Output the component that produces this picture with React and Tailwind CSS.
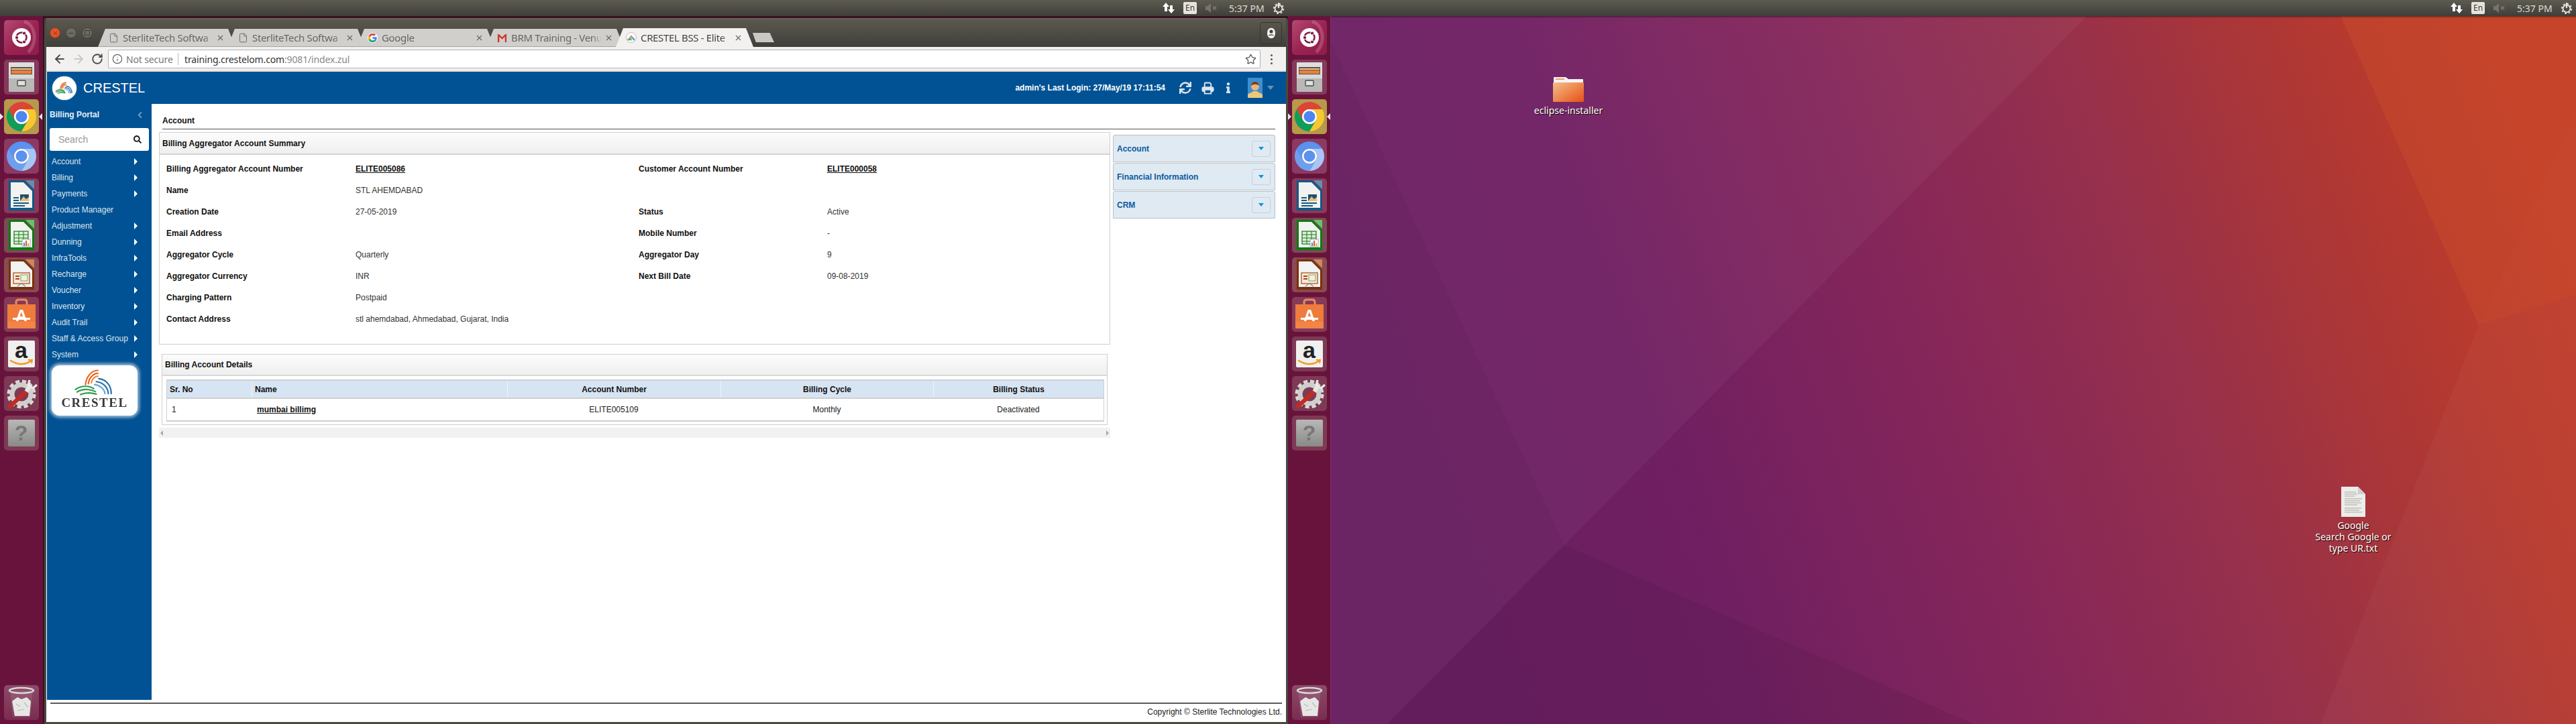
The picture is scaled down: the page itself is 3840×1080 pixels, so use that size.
import React from "react";
import { ArrowLeft, ArrowRight, RotateCw, Star, Info, X, File } from "lucide-react";
import { FaSync, FaInfo, FaSearch, FaChevronLeft } from "react-icons/fa";

const ubuntuFont = "font-['Noto_Sans',sans-serif]";

function ChromeMark({ a, b, c, core }) {
  return (
    <svg viewBox="0 0 52 52" className="w-[52px] h-[52px]">
      <path d="M6.95 15 A22 22 0 0 1 45.05 15 L26 15 A11 11 0 0 0 16.5 31.5 Z" fill={a} />
      <path d="M45.05 15 A22 22 0 0 1 26 48 L35.5 31.5 A11 11 0 0 0 26 15 Z" fill={b} />
      <path d="M26 48 A22 22 0 0 1 6.95 15 L16.5 31.5 A11 11 0 0 0 35.5 31.5 Z" fill={c} />
      <circle cx="26" cy="26" r="11" fill="#fff" />
      <circle cx="26" cy="26" r="8.5" fill={core} />
    </svg>
  );
}

function OfficeDoc({ edge, corner, children }) {
  return (
    <svg viewBox="0 0 52 52" className="w-[52px] h-[52px]">
      <path d="M7 3 H30 L45 18 V48 H7 Z" fill={edge} />
      <path d="M32 3 H45 V16 Z" fill={corner} />
      <path d="M10 6 H29 L42 19 V44 H10 Z" fill="#f2f2f0" />
      {children}
    </svg>
  );
}

function Swirl({ className, sw = 3 }) {
  return (
    <svg viewBox="0 0 100 66" className={className} fill="none" strokeLinecap="round">
      <g stroke="#e8641e" strokeWidth={sw}>
        <path d="M28 38 C30 20 42 4 58 4" />
        <path d="M35 36 C36 24 46 11 58 11" />
        <path d="M42 34 C43 27 50 18 58 18" stroke="#f08c3a" />
      </g>
      <g stroke="#2f9a4b" strokeWidth={sw}>
        <path d="M4 50 C20 38 40 42 48 48" />
        <path d="M8 56 C24 46 42 50 52 55" />
        <path d="M16 62 C30 56 44 58 54 61" />
      </g>
      <g stroke="#2a6fa8" strokeWidth={sw}>
        <path d="M60 24 C78 26 90 40 90 60" />
        <path d="M54 31 C70 33 82 44 83 60" />
        <path d="M50 38 C64 40 74 50 75 60" stroke="#5fa6d4" />
      </g>
    </svg>
  );
}

function Tile({ className, children }) {
  return (
    <div className={`w-[52px] h-[52px] rounded-[5px] shrink-0 flex items-center justify-center overflow-hidden ${className}`}>
      {children}
    </div>
  );
}

function Launcher({ rightEdge }) {
  return (
    <div className={`w-16 shrink-0 h-full relative flex flex-col items-center pt-[6px] pb-[6px] gap-[7px] bg-[#68133c] ${rightEdge}`}>
      <Tile className="bg-linear-to-br from-[#b34a74] via-[#9c2352] to-[#8d1b49]">
        <svg viewBox="0 0 52 52" className="w-[52px] h-[52px]">
          <path d="M30 2 C48 8 50 34 36 48" fill="none" stroke="#ffffff" strokeOpacity=".18" strokeWidth="5" />
          <circle cx="26" cy="26" r="14" fill="#fff" />
          <circle cx="26" cy="26" r="7.5" fill="none" stroke="#7a1a3c" strokeWidth="2.5" />
          <circle cx="19" cy="26" r="2.6" fill="#7a1a3c" stroke="#fff" />
          <circle cx="30" cy="19.5" r="2.6" fill="#7a1a3c" stroke="#fff" />
          <circle cx="30" cy="32.5" r="2.6" fill="#7a1a3c" stroke="#fff" />
        </svg>
      </Tile>
      <Tile className="bg-[#853a5a]">
        <svg viewBox="0 0 52 52" className="w-[52px] h-[52px]">
          <rect x="7" y="4" width="38" height="20" rx="1" fill="#dededc" />
          <rect x="10" y="11" width="32" height="12" fill="#5a5048" />
          <rect x="11" y="13" width="30" height="2" fill="#f6c48c" />
          <rect x="11" y="16" width="30" height="5" fill="#e8803a" />
          <rect x="7" y="22" width="38" height="26" rx="1" fill="#b8b8b6" />
          <rect x="7" y="22" width="38" height="6" fill="#d8d8d6" />
          <rect x="20" y="31" width="12" height="8" rx="1" fill="#e0e0de" stroke="#4b4b4b" strokeWidth="1.4" />
        </svg>
      </Tile>
      <Tile className="bg-[#b6994a]">
        <ChromeMark a="#dc4437" b="#f6c830" c="#109d58" core="#4d86f0" />
      </Tile>
      <Tile className="bg-[#8b3a63]">
        <ChromeMark a="#5a92ee" b="#a8c6f5" c="#6e9fef" core="#5a92ee" />
      </Tile>
      <Tile className="bg-[#8a3a5c]">
        <OfficeDoc edge="#0f5b84" corner="#5a93b4">
          <rect x="14" y="28" width="8" height="2" fill="#14597f" />
          <rect x="14" y="32" width="8" height="2" fill="#14597f" />
          <rect x="14" y="36" width="23" height="2" fill="#14597f" />
          <rect x="14" y="40" width="17" height="2" fill="#14597f" />
          <rect x="24" y="24" width="13" height="10" fill="#234f6d" />
          <path d="M24 34 L29 27 L33 31 L37 28 V34 Z" fill="#e3c07a" />
        </OfficeDoc>
      </Tile>
      <Tile className="bg-[#7a4b55]">
        <OfficeDoc edge="#0e7b14" corner="#6cc06a">
          <rect x="15" y="20" width="21" height="19" fill="#dff0d8" stroke="#177a1f" strokeWidth="1.2" />
          <path d="M15 25 H36 M15 30 H36 M15 35 H36 M22 20 V39 M29 20 V39" stroke="#177a1f" strokeWidth="1" />
          <rect x="27" y="32" width="12" height="11" fill="#fff" stroke="#888" strokeWidth=".7" />
          <rect x="29" y="37" width="2" height="5" fill="#2e8fd6" />
          <rect x="32" y="34" width="2" height="8" fill="#e0562a" />
          <rect x="35" y="38" width="2" height="4" fill="#f0a030" />
        </OfficeDoc>
      </Tile>
      <Tile className="bg-[#8a4a52]">
        <OfficeDoc edge="#7a300c" corner="#c98a5a">
          <rect x="14" y="23" width="24" height="16" fill="#fde8d8" stroke="#a1461c" strokeWidth="1.2" />
          <rect x="17" y="27" width="6" height="2" fill="#a1461c" />
          <rect x="17" y="31" width="6" height="2" fill="#a1461c" />
          <rect x="25" y="26" width="10" height="9" fill="#e9f3df" stroke="#668a44" strokeWidth=".8" />
          <path d="M20 43 L26 39 L32 43" stroke="#888" strokeWidth="1.2" fill="none" />
        </OfficeDoc>
      </Tile>
      <Tile className="bg-[#853a56]">
        <svg viewBox="0 0 52 52" className="w-[52px] h-[52px]">
          <path d="M18 14 V8 Q18 4 22 4 H30 Q34 4 34 8 V14" stroke="#e88a5c" strokeWidth="3" fill="none" />
          <rect x="5" y="11" width="42" height="36" fill="#ef7b3c" />
          <rect x="5" y="37" width="42" height="10" fill="#f28448" />
          <text x="26" y="36" textAnchor="middle" fontSize="24" fontWeight="700" fill="#fff" fontFamily="Liberation Sans">A</text>
          <rect x="13" y="31" width="26" height="3" fill="#fff" />
        </svg>
      </Tile>
      <Tile className="bg-[#7e3a55]">
        <div className="w-[40px] h-[40px] rounded-[2px] bg-[#f0f0f0] flex flex-col items-center text-[#222]">
          <span className="text-[34px] leading-[28px] font-bold">a</span>
          <svg viewBox="0 0 36 10" className="w-[36px] h-[10px]">
            <path d="M2 2 Q18 12 33 2" stroke="#f59a1c" strokeWidth="2.5" fill="none" strokeLinecap="round" />
            <path d="M28 1 L34 1 L33 6" stroke="#f59a1c" strokeWidth="2" fill="none" />
          </svg>
        </div>
      </Tile>
      <Tile className="bg-[#7e3a55]">
        <svg viewBox="0 0 52 52" className="w-[52px] h-[52px]">
          <circle cx="26" cy="27" r="19" fill="none" stroke="#d8d8d6" strokeWidth="5" strokeDasharray="6 4" />
          <circle cx="26" cy="27" r="14" fill="none" stroke="#cfcfcd" strokeWidth="7" />
          <path d="M9 45 L33 23" stroke="#c42a20" strokeWidth="6" strokeLinecap="round" />
          <path d="M33 23 L40 14" stroke="#e8e8e6" strokeWidth="6" />
          <path d="M38 6 L36 14 L43 18 L49 13" fill="none" stroke="#e8e8e6" strokeWidth="3.5" />
        </svg>
      </Tile>
      <Tile className="bg-[#7e3a55]">
        <div className="w-[40px] h-[40px] rounded-[2px] bg-linear-to-b from-[#b8b8b6] to-[#8a8a88] flex items-center justify-center text-[32px] leading-none font-bold text-[#777]">?</div>
      </Tile>
      <Tile className="mt-auto bg-linear-to-b from-[#8b4a68] to-[#7b2c50]">
        <svg viewBox="0 0 52 52" className="w-[52px] h-[52px]">
          <path d="M9 8 L13 48 H39 L43 8 Z" fill="#fff" fillOpacity=".1" />
          <ellipse cx="26" cy="8" rx="18" ry="4" fill="none" stroke="#d6d6d4" strokeWidth="2.5" />
          <path d="M12 24 L20 18 L26 21 L34 18 L40 24 L38 46 H16 Z" fill="#e6e6e4" />
          <path d="M18 28 L24 32 M30 26 L36 33 M20 38 L30 36" stroke="#bbb" strokeWidth="1.2" />
        </svg>
      </Tile>
      <svg viewBox="0 0 5 10" className="absolute left-0 top-[145px] w-[5px] h-[10px]"><path d="M0 0 L5 5 L0 10 Z" fill="#e8e8e8" /></svg>
      <svg viewBox="0 0 5 10" className="absolute right-[0px] top-[145px] w-[5px] h-[10px]"><path d="M5 0 L0 5 L5 10 Z" fill="#e8e8e8" /></svg>
    </div>
  );
}

function PanelIcons() {
  return (
    <div className={`${ubuntuFont} ml-auto mr-[5px] flex items-center h-6 text-[#dfdbd2]`}>
      <svg viewBox="0 0 20 20" className="w-[20px] h-[20px] mr-[12px]">
        <path d="M6 2 L11 8 H8 V15 H4 V8 H1 Z" fill="#fff" />
        <path d="M14 18 L9 12 H12 V6 H16 V12 H19 Z" fill="#fff" />
      </svg>
      <div className="w-5 h-[18px] rounded-[2px] bg-[#e6e3dd] flex items-center justify-center text-[#3c3b37] text-[12px]">En</div>
      <svg viewBox="0 0 20 20" className="w-[20px] h-[20px] ml-[11px]">
        <path d="M2 7 H5 L10 3 V17 L5 13 H2 Z" fill="#75736c" />
        <path d="M13 7.5 L18 12.5 M18 7.5 L13 12.5" stroke="#75736c" strokeWidth="1.8" />
      </svg>
      <span className="ml-[17px] w-[53px] text-[14px] whitespace-nowrap">5:37 PM</span>
      <svg viewBox="0 0 20 20" className="w-[18px] h-[18px] ml-[12px]">
        <circle cx="10" cy="11" r="6" fill="none" stroke="#e8e5de" strokeWidth="2" />
        <circle cx="10" cy="11" r="8" fill="none" stroke="#e8e5de" strokeWidth="2" strokeDasharray="3 3.3" />
        <path d="M10 1 V10" stroke="#e8e5de" strokeWidth="2.4" />
      </svg>
    </div>
  );
}

function Panel() {
  return (
    <div className="h-6 shrink-0 flex bg-linear-to-b from-[#5e5c51] to-[#3f3e39]">
      <PanelIcons />
    </div>
  );
}

function Tab({ icon, title, active, first }) {
  return (
    <div className={`relative w-[205px] h-[27px] shrink-0 flex items-center pl-[15px] pr-[15px] [clip-path:polygon(11px_0,calc(100%-11px)_0,100%_100%,0_100%)] ${first ? "" : "-ml-[12px]"} ${active ? "bg-[#f2f1f0] z-10 h-[28px]" : "bg-[#d0cfcc] border-b border-[#a5a5a3]"}`}>
      <span className="w-[16px] h-[16px] shrink-0 flex items-center justify-center">{icon}</span>
      <span className={`${ubuntuFont} ml-[6px] w-[135px] overflow-hidden whitespace-nowrap text-[15px] tracking-[-0.35px] leading-[20px] [mask-image:linear-gradient(to_right,black_90%,transparent)] ${active ? "text-[#454545]" : "text-[#666]"}`}>{title}</span>
      <X className="ml-[4px] shrink-0 text-[#666]" size={13} strokeWidth={2} />
    </div>
  );
}

function GoogleG() {
  return (
    <svg viewBox="0 0 48 48" className="w-[15px] h-[15px]">
      <circle cx="24" cy="24" r="24" fill="#fff" />
      <path d="M43 20H24v8.5h11C33.5 33.5 29.5 36.5 24 36.500 C17 36.5 11.500 31 11.500 24 S17 11.500 24 11.500 c3.200 0 6 1.200 8.200 3.100 l6.300-6.300 C34.700 4.900 29.700 3 24 3 C12.400 3 3 12.400 3 24 s9.400 21 21 21 C35 45 44 37 44 24 c0-1.400-.4-2.700-1-4z" fill="#4285f4" />
      <path d="M5.500 14 l7 5.100 C14.200 14.800 18.700 11.500 24 11.500 c3.200 0 6 1.200 8.200 3.100 l6.300-6.300 C34.700 4.900 29.700 3 24 3 C16 3 9.100 7.500 5.500 14z" fill="#ea4335" />
      <path d="M24 45 c5.500 0 10.500-2 14.200-5.500 l-6.600-5.500 c-2 1.600-4.600 2.500-7.600 2.500 -5.400 0-9.900-3.400-11.600-8.200 l-7 5.400 C8.900 40.400 15.900 45 24 45z" fill="#34a853" />
      <path d="M12.400 28.800 c-.5-1.500-.9-3.100-.9-4.800 s.3-3.400.9-4.900 l-7-5.100 C3.900 16.900 3 20.300 3 24 s.9 7.100 2.500 10.200z" fill="#fbbc05" />
    </svg>
  );
}

function ChromeBar() {
  return (
    <>
      <div className="h-[43px] shrink-0 flex bg-linear-to-b from-[#5c5a4f] to-[#403f3a] border-t border-[#6f6e64]">
        <div className="w-[77px] shrink-0 flex items-start gap-[8px] pl-[5px] pt-[13px]">
          <span className="w-4 h-4 rounded-full bg-[#e0552c] border border-[#8e3a1c] flex items-center justify-center"><X size={9} strokeWidth={2} className="text-[#6e2a12]" /></span>
          <span className="w-4 h-4 rounded-full bg-[#6d6c63] border border-[#45443e] flex items-center justify-center"><span className="w-2 h-[1px] bg-[#3a3935]" /></span>
          <span className="w-4 h-4 rounded-full bg-[#6d6c63] border border-[#45443e] flex items-center justify-center"><span className="w-2 h-2 border border-[#3a3935]" /></span>
        </div>
        <div className="flex items-end">
          <Tab first title="SterliteTech Softwa" icon={<File size={15} strokeWidth={1.5} className="text-[#666]" />} />
          <Tab title="SterliteTech Softwa" icon={<File size={15} strokeWidth={1.5} className="text-[#666]" />} />
          <Tab title="Google" icon={<GoogleG />} />
          <Tab title="BRM Training - Venu" icon={
            <svg viewBox="0 0 16 16" className="w-[15px] h-[15px]"><path d="M1 2 H3 L8 7 L13 2 H15 V15 H12.500 V6 L8 10.500 L3.500 6 V15 H1 Z" fill="#d0382c" /></svg>
          } />
          <Tab active title="CRESTEL BSS - Elite" icon={
            <span className="w-[16px] h-[16px] rounded-full bg-white border border-[#bbb] flex items-center justify-center"><Swirl className="w-[12px] h-[9px]" sw={8} /></span>
          } />
          <div className="w-[32px] h-[14px] ml-[-1px] mb-[7px] z-10 bg-[#c9c8c4] [clip-path:polygon(0_0,80%_0,100%_100%,15%_100%)]" />
        </div>
        <div className="ml-auto mr-[6px] mt-[5px] w-[33px] h-[33px] rounded-[4px] border border-[#36352f] flex items-center justify-center">
          <svg viewBox="0 0 16 20" className="w-[14px] h-[17px]">
            <path d="M8 1 C12 1 15 4 15 10 C15 16 12 19 8 19 C4 19 1 16 1 10 C1 4 4 1 8 1 Z" fill="#f2f2f0" />
            <circle cx="8" cy="7" r="3" fill="#403f3a" />
            <path d="M2.500 15 C4 11 12 11 13.500 15 C12 13.500 4 13.500 2.500 15Z" fill="#403f3a" />
          </svg>
        </div>
      </div>
      <div className="h-[37px] shrink-0 bg-[#f2f1f0] flex items-start pl-[10px] pr-[6px] pt-[4px] border-b-2 border-[#dedddb]">
        <div className="flex items-center text-[#4a4a4a] h-[28px]">
          <ArrowLeft size={20} strokeWidth={2.4} />
          <ArrowRight size={20} strokeWidth={2.4} className="ml-[8px] text-[#c8c8c6]" />
          <RotateCw size={18} strokeWidth={2.4} className="ml-[9px]" />
        </div>
        <div className={`${ubuntuFont} ml-[7px] flex-1 h-[28px] bg-white border border-[#b2b2b2] rounded-[2px] flex items-center text-[14px] tracking-[-0.15px] pl-[5px] pr-[5px] whitespace-nowrap`}>
          <Info size={16} strokeWidth={1.8} className="text-[#666]" />
          <span className="ml-[5px] text-[#777] w-[68px]">Not secure</span>
          <span className="ml-[9px] h-[18px] w-[1px] bg-[#bbb]" />
          <span className="ml-[9px] text-[#333]">training.crestelom.com</span>
          <span className="text-[#888]">:9081/index.zul</span>
          <Star size={17} strokeWidth={1.8} className="ml-auto text-[#555]" />
        </div>
        <div className="w-[32px] h-[28px] flex flex-col items-center justify-center gap-[3px]">
          <span className="w-[3px] h-[3px] rounded-full bg-[#555]" />
          <span className="w-[3px] h-[3px] rounded-full bg-[#555]" />
          <span className="w-[3px] h-[3px] rounded-full bg-[#555]" />
        </div>
      </div>
    </>
  );
}

function AppHeader() {
  return (
    <div className="h-12 shrink-0 ml-[1px] bg-[#015294] flex items-center text-white">
      <div className="ml-[8px] w-[36px] h-[35px] rounded-full bg-white flex items-center justify-center shadow-[0_0_2px_rgba(255,255,255,.7)]">
        <Swirl className="w-[28px] h-[20px]" sw={5} />
      </div>
      <span className="ml-[10px] text-[20px] leading-none font-normal">CRESTEL</span>
      <span className="ml-auto text-[12px] font-bold whitespace-nowrap">admin's Last Login: 27/May/19 17:11:54</span>
      <FaSync className="ml-[21px] text-[#dbe6f0]" size={18} />
      <svg viewBox="0 0 20 20" className="ml-[15px] w-[19px] h-[21px]" fill="none" stroke="#dbe6f0" strokeWidth="2">
        <path d="M5 9 V2.500 Q5 1.500 6 1.500 H13 L15 3.500 V9" />
        <path d="M5 15 H3 Q1.500 15 1.500 13.500 V10.500 Q1.500 8.500 3.500 8.500 H16.500 Q18.500 8.500 18.500 10.500 V13.500 Q18.500 15 17 15 H15" fill="#dbe6f0" />
        <path d="M5 12.500 H15 V18.500 H5 Z" fill="#015294" />
      </svg>
      <FaInfo className="ml-[13px] text-[#dbe6f0]" size={16} />
      <svg viewBox="0 0 22 30" className="ml-[21px] w-[22px] h-[30px]">
        <rect width="22" height="30" fill="#3d8fd0" />
        <path d="M0 30 V25 C3 22 7 22 8 20 H14 C15 22 19 22 22 25 V30 Z" fill="#efc77c" />
        <circle cx="11" cy="13" r="6" fill="#e9b47c" />
        <path d="M5 12 C5 4 17 4 17 12 C14 9 8 9 5 12 Z" fill="#7b3f1e" />
      </svg>
      <span className="ml-[7px] mr-[18px] w-0 h-0 border-l-[5px] border-r-[5px] border-t-[6px] border-l-transparent border-r-transparent border-t-[#6f8fb0]" />
    </div>
  );
}

const menu = [
  ["Account", 1], ["Billing", 1], ["Payments", 1], ["Product Manager", 0], ["Adjustment", 1], ["Dunning", 1],
  ["InfraTools", 1], ["Recharge", 1], ["Voucher", 1], ["Inventory", 1], ["Audit Trail", 1], ["Staff & Access Group", 1], ["System", 1],
];

function Sidebar() {
  return (
    <div className="w-[156px] shrink-0 ml-[1px] bg-[#015294] text-[12px]">
      <div className="h-8 flex items-center justify-between pl-[4px] pr-[12px] font-bold text-[#e6eef5]">
        <span>Billing Portal</span>
        <FaChevronLeft className="text-[#7ca6ca]" size={11} />
      </div>
      <div className="mt-1 ml-[4px] w-[148px] h-[34px] bg-white rounded-[3px] flex items-center pl-[13px] pr-[11px] text-[14px] text-[#999]">
        <span>Search</span>
        <FaSearch className="ml-auto text-[#1d1d1d]" size={12} />
      </div>
      <div className="mt-[4px]">
        {menu.map(([m, a]) => (
          <div key={m} className="h-6 w-[135px] pl-[7px] flex items-center justify-between text-[#dbe5ef] whitespace-nowrap">
            <span>{m}</span>
            {a ? <span className="w-0 h-0 border-y-[5px] border-l-[5px] border-y-transparent border-l-white" /> : null}
          </div>
        ))}
      </div>
      <div className="mt-[4px] ml-[7px] w-[128px] h-[75px] bg-white rounded-[12px] shadow-[0_0_4px_3px_rgba(255,255,255,.6)] flex flex-col items-center pt-[5px]">
        <Swirl className="w-[62px] h-[41px] blur-[0.4px]" sw={3.5} />
        <span className="font-['Liberation_Serif',serif] font-bold text-[19px] leading-[20px] tracking-[1.5px] text-[#3a3a3a] blur-[0.3px] whitespace-nowrap">CRESTEL</span>
      </div>
    </div>
  );
}

const rows = [
  ["Billing Aggregator Account Number", "ELITE005086", "Customer Account Number", "ELITE000058", true],
  ["Name", "STL AHEMDABAD", "", ""],
  ["Creation Date", "27-05-2019", "Status", "Active"],
  ["Email Address", "", "Mobile Number", "-"],
  ["Aggregator Cycle", "Quarterly", "Aggregator Day", "9"],
  ["Aggregator Currency", "INR", "Next Bill Date", "09-08-2019"],
  ["Charging Pattern", "Postpaid", "", ""],
  ["Contact Address", "stl ahemdabad, Ahmedabad, Gujarat, India", "", ""],
];

function SummaryPanel() {
  return (
    <div className="h-[317px] border border-[#cfcfcf] bg-white">
      <div className="h-[33px] border-b-2 border-[#d4d4d4] pl-[4px] pr-[3px] bg-linear-to-b from-[#fcfcfc] to-[#efefef] flex items-center font-bold text-[#111]">
        Billing Aggregator Account Summary
      </div>
      <div className="pt-[5px] pl-[10px] grid grid-cols-[282px_422px_281px_1fr] auto-rows-[32px] items-center">
        {rows.map((r) => (
          <React.Fragment key={r[0]}>
            <span className="font-bold text-[#111]">{r[0]}</span>
            <span className={r[4] ? "font-bold underline text-[#111]" : "text-[#333]"}>{r[1]}</span>
            <span className="font-bold text-[#111]">{r[2]}</span>
            <span className={r[4] ? "font-bold underline text-[#111]" : "text-[#333]"}>{r[3]}</span>
          </React.Fragment>
        ))}
      </div>
    </div>
  );
}

function DetailsPanel() {
  return (
    <div className="mt-[14px] ml-[4px] mr-[4px] h-[106px] border border-[#cfcfcf] bg-white">
      <div className="h-[32px] border-b-2 border-[#d8d8d8] pl-[4px] bg-linear-to-b from-[#fcfcfc] to-[#efefef] flex items-center font-bold text-[#111]">
        Billing Account Details
      </div>
      <div className="mt-[5px] ml-[6px] mr-[4px] border-l border-r border-t-2 border-b-2 border-[#cfcfcf] text-[#222]">
        <div className="h-[27px] bg-[#d7e4f3] border-b-2 border-[#cfcfcf] grid grid-cols-[126px_381px_318px_317px_1fr] items-center font-bold text-[#111]">
          <span className="pl-[4px] h-full flex items-center">Sr. No</span>
          <span className="pl-[4px] h-full flex items-center border-l border-[#eef3f9]">Name</span>
          <span className="h-full flex items-center justify-center border-l border-[#eef3f9]">Account Number</span>
          <span className="h-full flex items-center justify-center border-l border-[#eef3f9]">Billing Cycle</span>
          <span className="h-full flex items-center justify-center border-l border-[#eef3f9]">Billing Status</span>
        </div>
        <div className="h-[32px] grid grid-cols-[126px_381px_318px_317px_1fr] items-center">
          <span className="pl-[7px]">1</span>
          <span className="pl-[8px] font-bold underline text-[#111]">mumbai billimg</span>
          <span className="text-center">ELITE005109</span>
          <span className="text-center">Monthly</span>
          <span className="text-center">Deactivated</span>
        </div>
      </div>
    </div>
  );
}

function Accordion({ title }) {
  return (
    <div className="h-[41px] bg-[#dfeaf3] border border-[#bcc0c4] rounded-t-[3px] flex items-center pl-[5px] pr-[6px] font-bold text-[#0d5a9c]">
      <span>{title}</span>
      <span className="ml-auto w-[28px] h-[24px] rounded-[3px] border border-[#c6d2dc] flex items-center justify-center">
        <span className="w-0 h-0 border-x-[4px] border-t-[5px] border-x-transparent border-t-[#0a94dc]" />
      </span>
    </div>
  );
}

function Content() {
  return (
    <div className="flex-1 min-w-0 bg-white text-[12px] pr-[16px]">
      <div className="ml-[16px] h-[38px] pt-[18px] border-b border-[#555] font-bold text-[#111] leading-[14px]">Account</div>
      <div className="flex pl-[11px] mt-[4px]">
        <div className="w-[1418px] shrink-0">
          <SummaryPanel />
          <DetailsPanel />
          <div className="mt-[4px] h-[15px] bg-[#f1f1f1] flex items-center justify-between px-[2px]">
            <span className="w-0 h-0 border-y-[4px] border-r-[4px] border-y-transparent border-r-[#aaa]" />
            <span className="w-0 h-0 border-y-[4px] border-l-[4px] border-y-transparent border-l-[#aaa]" />
          </div>
        </div>
        <div className="ml-[4px] flex-1 pt-[4px] flex flex-col gap-[1px]">
          <Accordion title="Account" />
          <Accordion title="Financial Information" />
          <Accordion title="CRM" />
        </div>
      </div>
    </div>
  );
}

function BrowserWindow() {
  return (
    <div className="flex-1 min-w-0 h-full pt-[3px] bg-[#3a1020]">
      <div className="h-[1053px] ml-[2px] flex flex-col bg-[#4a4942] border-l-[3px] border-r-[3px] border-b-[3px] border-[#4a4942] rounded-t-[3px]">
        <div className="flex-1 min-h-0 flex flex-col bg-white">
          <ChromeBar />
          <AppHeader />
          <div className="flex-1 min-h-0 flex">
            <Sidebar />
            <Content />
          </div>
          <div className="h-[29px] shrink-0 mx-[6px] mt-[4px] pb-[3px] border-t-2 border-[#5b5b5b] flex items-center justify-end text-[12px] text-[#222]">
            Copyright © Sterlite Technologies Ltd.
          </div>
        </div>
      </div>
    </div>
  );
}

function Wallpaper() {
  return (
    <svg viewBox="1984 24 1856 1056" preserveAspectRatio="none" className="absolute inset-0 w-full h-full">
      <defs>
        <linearGradient id="wall" gradientUnits="userSpaceOnUse" x1="2100" y1="900" x2="3800" y2="300">
          <stop offset="0" stopColor="#6a1f62" />
          <stop offset=".24" stopColor="#6f1f62" />
          <stop offset=".47" stopColor="#85265a" />
          <stop offset=".66" stopColor="#96304c" />
          <stop offset=".8" stopColor="#aa3638" />
          <stop offset=".9" stopColor="#b83a2e" />
          <stop offset="1" stopColor="#bf3c2a" />
        </linearGradient>
      </defs>
      <rect x="1984" y="24" width="1856" height="1056" fill="url(#wall)" />
      <polygon points="1984,24 3111,24 2332,813 2068,1080 1984,1080" fill="#fff" fillOpacity=".04" />
      <polygon points="1984,62 2332,813 2068,1080 1984,1080" fill="#000" fillOpacity=".03" />
      <polygon points="2332,813 2943,1080 2068,1080" fill="#000" fillOpacity=".06" />
      <polygon points="3489,24 3840,24 3840,162 3695,485" fill="#e8702a" fillOpacity=".16" />
      <polygon points="3695,485 3840,162 3840,440" fill="#f08040" fillOpacity=".14" />
      <polygon points="3695,485 3840,440 3840,1080 3459,1080" fill="#fff" fillOpacity=".03" />
    </svg>
  );
}

function Desktop() {
  return (
    <div className={`${ubuntuFont} flex-1 h-full relative overflow-hidden`}>
      <Wallpaper />
      <div className="absolute left-0 right-0 top-0 h-[3px] bg-linear-to-b from-[#00000066] to-transparent" />
      <div className="absolute left-[281px] top-[91px] w-[146px] flex flex-col items-center text-white text-[14px] leading-[18px] [text-shadow:1px_1px_1px_#000]">
        <svg viewBox="0 0 46 37" className="w-[46px] h-[37px]">
          <defs>
            <linearGradient id="fold" x1="0" y1="0" x2="1" y2="1">
              <stop offset="0" stopColor="#f2c08c" />
              <stop offset="1" stopColor="#e84f12" />
            </linearGradient>
          </defs>
          <path d="M1 8 V1 Q1 0 2 0 H19 L23 3 H44 Q45 3 45 4 V10 H1 Z" fill="#f4f4f4" />
          <rect x="4" y="2" width="13" height="2" fill="#f0a070" />
          <rect y="8" width="46" height="29" rx="1" fill="url(#fold)" />
        </svg>
        <span className="mt-[4px]">eclipse-installer</span>
      </div>
      <div className="absolute left-[1444px] top-[702px] w-[160px] flex flex-col items-center text-center text-white text-[14px] leading-[17px] [text-shadow:1px_1px_1px_#000]">
        <svg viewBox="0 0 36 45" className="w-[36px] h-[45px]">
          <path d="M0 0 H25 L36 11 V45 H0 Z" fill="#ecece8" />
          <path d="M25 0 L36 11 H25 Z" fill="#cfcfcb" />
          <path d="M5 8 H22 M5 11 H24 M5 14 H20 M5 18 H31 M5 21 H28 M5 24 H30 M5 27 H24 M5 32 H30 M5 35 H27 M5 38 H31" stroke="#a8a8a4" strokeWidth="1" />
        </svg>
        <span className="mt-[4px]">Google</span>
        <span>Search Google or</span>
        <span>type UR.txt</span>
      </div>
    </div>
  );
}

export default function App() {
  return (
    <div className="w-[3840px] h-[1080px] overflow-hidden flex font-['Liberation_Sans',Arial,sans-serif]">
      <div className="w-[1920px] h-full flex flex-col shrink-0">
        <Panel />
        <div className="flex-1 min-h-0 flex">
          <Launcher rightEdge="border-r border-[#5a1a3a]" />
          <BrowserWindow />
        </div>
      </div>
      <div className="w-[1920px] h-full flex flex-col shrink-0">
        <Panel />
        <div className="flex-1 min-h-0 flex">
          <Launcher rightEdge="border-r border-[#7c2e5f]" />
          <Desktop />
        </div>
      </div>
    </div>
  );
}
